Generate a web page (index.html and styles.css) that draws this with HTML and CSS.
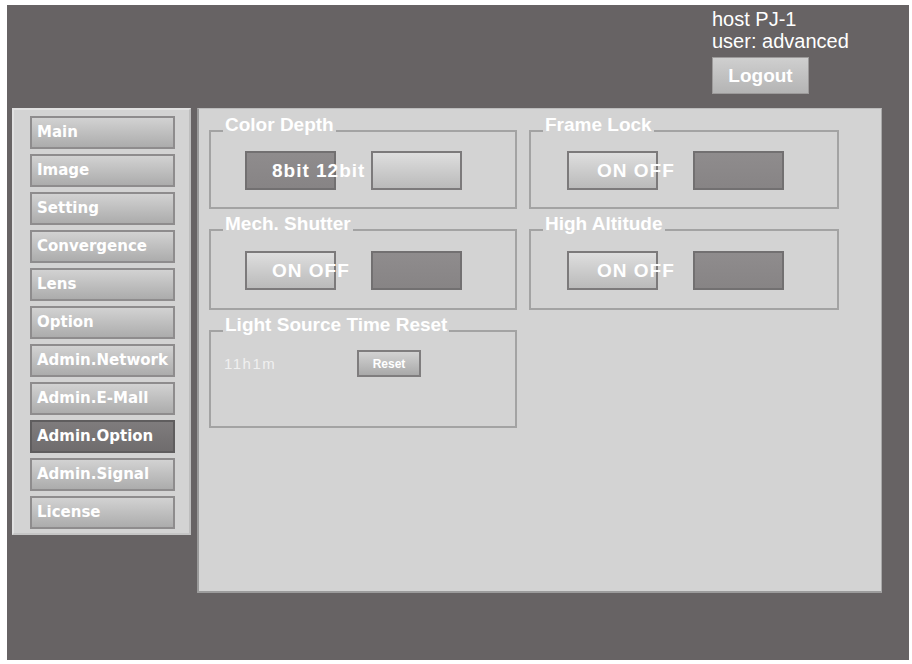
FILE: index.html
```html
<!DOCTYPE html>
<html lang="en">
<head>
<meta charset="utf-8">
<title>Admin.Option</title>
<link rel="stylesheet" href="styles.css">
</head>
<body>
<div class="frame">
  <header class="header">
    <div class="user">
      <div class="line">host PJ-1</div>
      <div class="line">user: advanced</div>
      <button class="logout">Logout</button>
    </div>
  </header>
  <div class="main">
    <nav class="nav">
      <div class="nav-item">Main</div>
      <div class="nav-item">Image</div>
      <div class="nav-item">Setting</div>
      <div class="nav-item">Convergence</div>
      <div class="nav-item">Lens</div>
      <div class="nav-item">Option</div>
      <div class="nav-item">Admin.Network</div>
      <div class="nav-item">Admin.E-Mall</div>
      <div class="nav-item active">Admin.Option</div>
      <div class="nav-item">Admin.Signal</div>
      <div class="nav-item">License</div>
    </nav>
    <section class="content">
      <fieldset class="group row1">
        <legend>Color Depth</legend>
        <div class="toggles">
          <div class="tbtn dark"><span class="tlabel">8bit 12bit</span></div>
          <div class="tbtn light"></div>
        </div>
      </fieldset>
      <fieldset class="group row1 right">
        <legend>Frame Lock</legend>
        <div class="toggles">
          <div class="tbtn light"><span class="tlabel wide">ON OFF</span></div>
          <div class="tbtn dark"></div>
        </div>
      </fieldset>
      <fieldset class="group row2">
        <legend>Mech. Shutter</legend>
        <div class="toggles">
          <div class="tbtn light"><span class="tlabel">ON OFF</span></div>
          <div class="tbtn dark"></div>
        </div>
      </fieldset>
      <fieldset class="group row2 right">
        <legend>High Altitude</legend>
        <div class="toggles">
          <div class="tbtn light"><span class="tlabel wide">ON OFF</span></div>
          <div class="tbtn dark"></div>
        </div>
      </fieldset>
      <fieldset class="group row3">
        <legend>Light Source Time Reset</legend>
        <div class="reset-row">
          <span class="hours">11h1m</span>
          <button class="reset">Reset</button>
        </div>
      </fieldset>
    </section>
  </div>
</div>
</body>
</html>
```
FILE: styles.css
```css
html, body {
  margin: 0;
  padding: 0;
  background: #ffffff;
}

body {
  font-family: "Liberation Sans", Arial, sans-serif;
}

.frame {
  margin: 5px 0 0 7px;
  width: 902px;
  height: 655px;
  background: #676364;
  box-sizing: border-box;
}

.header {
  height: 103px;
  box-sizing: border-box;
  padding: 3px 0 0 705px;
}

.user .line {
  color: #ffffff;
  font-size: 20px;
  line-height: 22px;
}

.logout {
  margin-top: 5px;
  width: 97px;
  height: 37px;
  border: 1px solid #9c9a9a;
  background: linear-gradient(#cfcfcf, #b4b4b4);
  color: #ffffff;
  font-family: "Liberation Sans", Arial, sans-serif;
  font-weight: bold;
  font-size: 19px;
  padding: 0;
  display: block;
}

.main {
  display: flex;
  align-items: flex-start;
  gap: 6px;
  margin-left: 5px;
}

.nav {
  width: 179px;
  height: 427px;
  box-sizing: border-box;
  background: #d3d3d3;
  border: 2px solid #e1e1e1;
  border-right-color: #bdbdbd;
  border-bottom-color: #c5c5c5;
  padding: 6px 0 0 16px;
  display: flex;
  flex-direction: column;
  gap: 5px;
}

.nav-item {
  width: 145px;
  height: 33px;
  box-sizing: border-box;
  border: 2px solid #8e8c8d;
  background: linear-gradient(#d2d2d2, #acacac);
  color: #ffffff;
  font-family: "DejaVu Sans", sans-serif;
  font-weight: bold;
  font-size: 15px;
  line-height: 28px;
  padding-left: 5px;
  white-space: nowrap;
  overflow: hidden;
}

.nav-item.active {
  background: linear-gradient(#7f7c7d, #6f6c6d);
  border-color: #5f5d5e;
}

.content {
  width: 685px;
  height: 485px;
  box-sizing: border-box;
  background: #d3d3d3;
  border-left: 2px solid #9a9a9a;
  border-top: 1px solid #bcbcbc;
  border-right: 1px solid #a9a9a9;
  border-bottom: 2px solid #9c9c9c;
  padding: 6px 0 0 10px;
  display: grid;
  grid-template-columns: 308px 310px;
  grid-auto-rows: min-content;
  column-gap: 12px;
  row-gap: 5px;
}

.group {
  margin: 0;
  padding: 0;
  border: 2px solid #a3a3a3;
  box-sizing: border-box;
  min-width: 0;
}

.group legend {
  margin-left: 12px;
  padding: 0 2px 12px;
  color: #ffffff;
  font-weight: bold;
  font-size: 19px;
  line-height: 20px;
}

.row1 { height: 94px; }
.row2 { height: 96px; }
.row3 { height: 113px; }

.toggles {
  display: flex;
  gap: 35px;
  margin: 4px 0 0 34px;
}

.right .toggles {
  margin-left: 36px;
}

.row2 .toggles {
  margin-top: 5px;
}

.tbtn {
  width: 91px;
  height: 39px;
  box-sizing: border-box;
  border: 2px solid #727071;
}

.tbtn.dark {
  background: linear-gradient(#8f8c8d, #878485);
}

.tbtn.light {
  background: linear-gradient(#dedede, #bababa);
  border-color: #7c7a7b;
}

.tlabel {
  display: block;
  padding-left: 25px;
  color: #ffffff;
  font-weight: bold;
  font-size: 19px;
  letter-spacing: 1px;
  line-height: 35px;
  white-space: nowrap;
}

.tlabel.wide {
  padding-left: 28px;
}

.reset-row {
  display: flex;
  align-items: center;
  margin: 3px 0 0 13px;
}

.hours {
  color: #f0f0f0;
  font-size: 15px;
  letter-spacing: 1.5px;
  width: 133px;
}

.reset {
  width: 64px;
  height: 27px;
  box-sizing: border-box;
  border: 2px solid #7f7d7e;
  background: linear-gradient(#d2d2d2, #a9a9a9);
  color: #ffffff;
  font-family: "Liberation Sans", Arial, sans-serif;
  font-weight: bold;
  font-size: 12px;
  padding: 0;
}
```
